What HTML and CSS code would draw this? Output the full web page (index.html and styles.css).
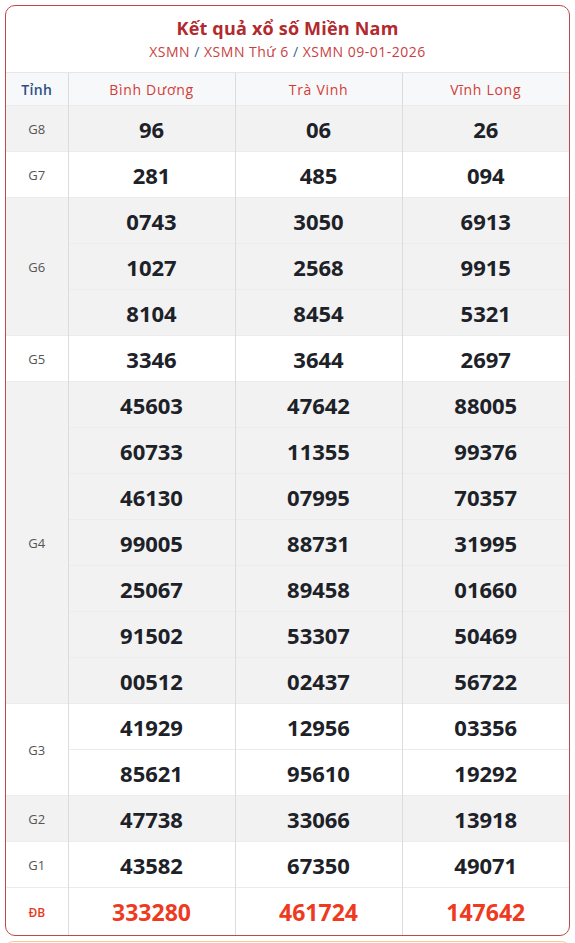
FILE: index.html
```html
<!DOCTYPE html>
<html lang="vi">
<head>
<meta charset="utf-8">
<title>Kết quả xổ số Miền Nam</title>
<link rel="stylesheet" href="styles.css">
</head>
<body>
<div class="card">
  <div class="card-head">
    <h1 class="title">Kết quả xổ số Miền Nam</h1>
    <div class="crumbs"><span>XSMN</span> <i>/</i> <span>XSMN Thứ 6</span> <i>/</i> <span>XSMN 09-01-2026</span></div>
  </div>
  <table class="kq">
    <colgroup><col class="c-label"><col><col><col></colgroup>
    <thead>
      <tr><th class="lbl">Tỉnh</th><th>Bình Dương</th><th>Trà Vinh</th><th>Vĩnh Long</th></tr>
    </thead>
    <tbody class="gray">
      <tr><td class="lbl">G8</td><td>96</td><td>06</td><td>26</td></tr>
    </tbody>
    <tbody>
      <tr><td class="lbl">G7</td><td>281</td><td>485</td><td>094</td></tr>
    </tbody>
    <tbody class="gray">
      <tr><td class="lbl" rowspan="3">G6</td><td>0743</td><td>3050</td><td>6913</td></tr>
      <tr><td>1027</td><td>2568</td><td>9915</td></tr>
      <tr><td>8104</td><td>8454</td><td>5321</td></tr>
    </tbody>
    <tbody>
      <tr><td class="lbl">G5</td><td>3346</td><td>3644</td><td>2697</td></tr>
    </tbody>
    <tbody class="gray">
      <tr><td class="lbl" rowspan="7">G4</td><td>45603</td><td>47642</td><td>88005</td></tr>
      <tr><td>60733</td><td>11355</td><td>99376</td></tr>
      <tr><td>46130</td><td>07995</td><td>70357</td></tr>
      <tr><td>99005</td><td>88731</td><td>31995</td></tr>
      <tr><td>25067</td><td>89458</td><td>01660</td></tr>
      <tr><td>91502</td><td>53307</td><td>50469</td></tr>
      <tr><td>00512</td><td>02437</td><td>56722</td></tr>
    </tbody>
    <tbody>
      <tr><td class="lbl" rowspan="2">G3</td><td>41929</td><td>12956</td><td>03356</td></tr>
      <tr><td>85621</td><td>95610</td><td>19292</td></tr>
    </tbody>
    <tbody class="gray">
      <tr><td class="lbl">G2</td><td>47738</td><td>33066</td><td>13918</td></tr>
    </tbody>
    <tbody>
      <tr><td class="lbl">G1</td><td>43582</td><td>67350</td><td>49071</td></tr>
    </tbody>
    <tbody class="db">
      <tr><td class="lbl">ĐB</td><td>333280</td><td>461724</td><td>147642</td></tr>
    </tbody>
  </table>
</div>
<div class="next-box"></div>
</body>
</html>
```

FILE: styles.css
```css
html, body {
  margin: 0;
  padding: 0;
  background: #ffffff;
  font-family: "Open Sans", "Noto Sans", sans-serif;
}

.card {
  margin: 5px 5px 0 5px;
  border: 1px solid #c0474a;
  border-radius: 10px;
  overflow: hidden;
  background: #fff;
}

.card-head {
  text-align: center;
  padding: 9px 0 10px;
}

.title {
  margin: 0;
  font-size: 18px;
  line-height: 26px;
  font-weight: 700;
  color: #b2292e;
  letter-spacing: 0.2px;
}

.crumbs {
  margin-top: 1px;
  font-size: 14px;
  line-height: 20px;
  color: #c9413f;
  letter-spacing: 0.5px;
}

.crumbs i {
  font-style: normal;
  color: #3d5f8f;
}

.kq {
  width: 100%;
  border-collapse: collapse;
  table-layout: fixed;
}

.c-label {
  width: 62px;
}

.kq th {
  height: 32px;
  padding: 0;
  background: #f7f8fa;
  font-size: 14px;
  font-weight: 500;
  letter-spacing: 0.7px;
  color: #d23c36;
  border-top: 1px solid #e6e6e6;
  border-left: 1px solid #dcdcdc;
  text-align: center;
}

.kq th.lbl {
  color: #2c4f86;
  font-weight: 600;
  letter-spacing: 0.3px;
  border-left: none;
}

.kq td {
  height: 45px;
  padding: 0;
  text-align: center;
  font-size: 22px;
  font-weight: 700;
  color: #1d2128;
  border-left: 1px solid #dcdcdc;
  border-top: 1px solid #ececec;
}

.kq td.lbl {
  font-size: 13px;
  font-weight: 500;
  color: #555;
  border-left: none;
}

.gray td {
  background: #f2f2f2;
}

.db td {
  height: 46px;
  padding-top: 1px;
  color: #ee3a1f;
  font-size: 23px;
}

.db td.lbl {
  color: #e63a1e;
  font-size: 12px;
  font-weight: 600;
}

.next-box {
  margin: 5px 5px 0 5px;
  height: 20px;
  border: 1px solid #f2cf9a;
  border-radius: 8px;
  background: #fffaf1;
}
```
